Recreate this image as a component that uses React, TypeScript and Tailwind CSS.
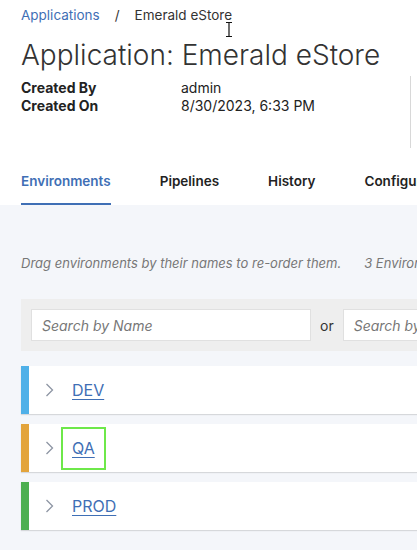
import React from "react";

const envs = [
  { name: "DEV", color: "bg-[#4fb0e8]", focused: false },
  { name: "QA", color: "bg-[#e3a43b]", focused: true },
  { name: "PROD", color: "bg-[#4caf50]", focused: false },
];

function Chevron() {
  return (
    <svg width="10" height="16" viewBox="0 0 10 16" fill="none" className="shrink-0">
      <path d="M1.5 2l6 6-6 6" stroke="#8d95a3" strokeWidth="1.3" />
    </svg>
  );
}

export default function App(): React.JSX.Element {
  return (
    <div
      className="w-[417px] h-[550px] overflow-hidden bg-[#f4f6fa] relative"
      style={{ fontFamily: "Inter, Roboto, sans-serif" }}
    >
      {/* header */}
      <div className="bg-white w-[640px] relative">
        <div className="absolute left-[410px] top-[76px] w-px h-[72px] bg-[#d8d8d8]" />
        <div className="flex items-center pl-[21px] pt-[5px] pb-[2px] text-[13.5px] h-[20px] box-content">
          <span className="text-[#3f6fb5]">Applications</span>
          <span className="ml-[15px] text-[#333]">/</span>
          <span className="ml-[15px] text-[#333]">Emerald eStore</span>
        </div>
        {/* mouse cursor */}
        <svg className="absolute left-[224px] top-[21px]" width="10" height="17" viewBox="0 0 10 17">
          <path d="M2 1.5h6M5 1.5v14M2 15.5h6" stroke="#fff" strokeWidth="3" />
          <path d="M2 1.5h6M5 1.5v14M2 15.5h6" stroke="#111" strokeWidth="1.2" />
        </svg>
        <h1 className="pl-[21px] mt-[9px] text-[28px] leading-[38px] font-light text-[#333]">
          Application: Emerald eStore
        </h1>
        <div className="pl-[21px] mt-[5px] grid grid-cols-[160px_auto] text-[14px] leading-[18px] text-[#222]">
          <span className="font-bold">Created By</span>
          <span>admin</span>
          <span className="font-bold">Created On</span>
          <span>8/30/2023, 6:33 PM</span>
        </div>
        <div className="h-[47px]" />
        <div className="flex gap-[49px] pl-[21px] text-[13.5px] font-semibold text-[#222] h-[43px]">
          <div className="flex flex-col justify-between text-[#3f6fb5]">
            <span className="mt-[9px]">Environments</span>
            <div className="h-[2px] bg-[#3f6fb5]" />
          </div>
          <span className="mt-[9px]">Pipelines</span>
          <span className="mt-[9px]">History</span>
          <span className="mt-[9px]">Configuration</span>
        </div>
      </div>

      {/* body */}
      <div className="pl-[21px] w-[640px]">
        <div className="flex mt-[50px] text-[13px] italic text-[#777] h-[18px] items-center">
          <span>Drag environments by their names to re-order them.</span>
          <span className="ml-[23px]">3 Environments</span>
        </div>
        <div className="mt-[26px] bg-[#eeeeee] h-[52px] flex items-center px-[10px]">
          <div className="w-[280px] h-[32px] bg-white border border-[#e0e0e0] flex items-center px-[10px] text-[14px] italic text-[#777]">
            Search by Name
          </div>
          <span className="text-[14px] text-[#333] ml-[9px] mr-[9px]">or</span>
          <div className="w-[200px] h-[32px] bg-white border border-[#e0e0e0] flex items-center px-[10px] text-[14px] italic text-[#777]">
            Search by Type
          </div>
        </div>
        <div className="mt-[15px] flex flex-col gap-[10px]">
          {envs.map((e) => (
            <div key={e.name} className="h-[48px] bg-white flex items-stretch shadow-[0_1px_1px_rgba(0,0,0,0.12)]">
              <div className={`w-[8px] ${e.color}`} />
              <div className="flex items-center pl-[16px]">
                <Chevron />
                <span
                  className={`ml-[6px] px-[9px] h-[43px] flex items-center text-[16px] text-[#3f6fb5] underline underline-offset-[3px] ${
                    e.focused ? "border-2 border-[#6ee84a]" : "border-2 border-transparent"
                  }`}
                >
                  {e.name}
                </span>
              </div>
            </div>
          ))}
        </div>
      </div>
    </div>
  );
}
